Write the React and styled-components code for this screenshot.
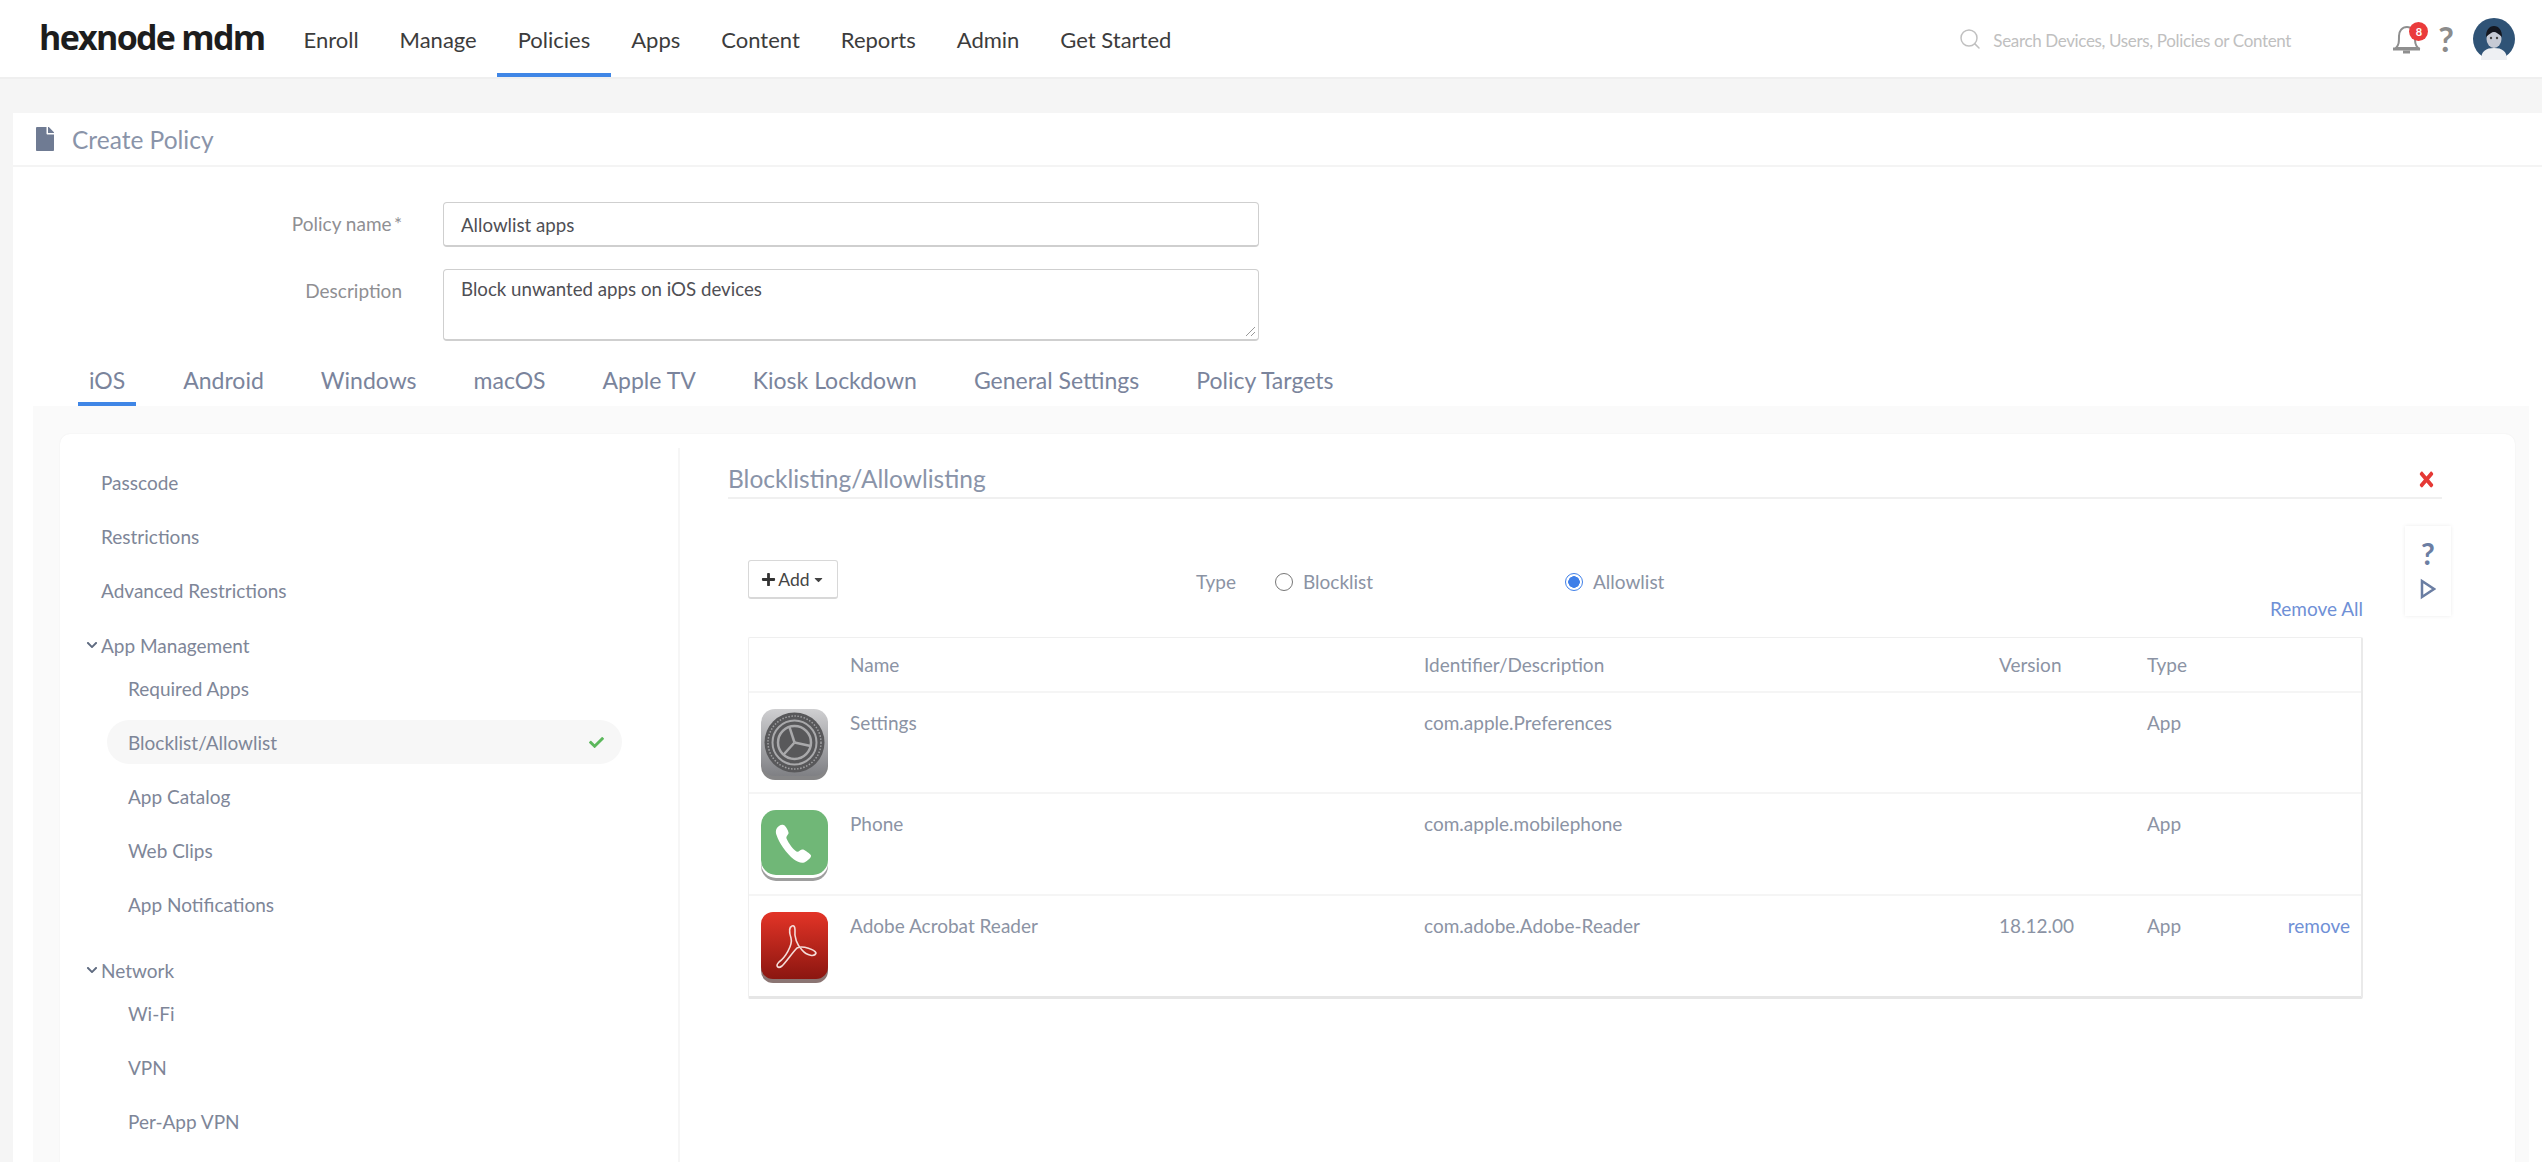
import React from 'react';
import styled, { createGlobalStyle } from 'styled-components';
import { FaFile, FaCheck, FaPlus, FaCaretDown, FaChevronDown, FaTimes } from 'react-icons/fa';
import { FiSearch } from 'react-icons/fi';

const Global = createGlobalStyle`
  html, body { margin: 0; padding: 0; height: 100%; background: #f5f5f5; }
  body { font-family: Lato, "Open Sans", sans-serif; overflow: hidden; }
  * { box-sizing: border-box; }
`;

const Page = styled.div`height: 1162px; overflow: hidden; display: flex; flex-direction: column;`;

const Header = styled.header`
  height: 79px; flex: none; background: #fff; border-bottom: 2px solid #efefef;
  display: flex; align-items: stretch; padding-left: 39px;
`;
const Logo = styled.div`
  font: 700 34px/1 "Open Sans", sans-serif; color: #1d1d1d; letter-spacing: -1.7px;
  width: 244px; align-self: center; padding-bottom: 4px; white-space: nowrap;
`;
const Nav = styled.nav`display: flex; height: 77px;`;
const NavItem = styled.a`
  padding: 6px 20.5px 0; display: flex; align-items: center; font-size: 22px; color: #3c3c3c;
  border-bottom: 4px solid ${p => (p.$active ? '#3f86e6' : 'transparent')};
`;
const HeaderRight = styled.div`margin-left: auto; display: flex; align-items: center; padding-right: 27px;`;
const SearchWrap = styled.div`display: flex; align-items: center; width: 434px; color: #c0c0c0; font-size: 17px; letter-spacing: -0.35px;`;
const SearchText = styled.span`margin: 3px 0 0 11px; white-space: nowrap;`;
const BellWrap = styled.div`position: relative; width: 30px; height: 34px; margin-right: 16px;`;
const Badge = styled.span`
  position: absolute; top: 0; right: -6px; width: 19px; height: 19px; border-radius: 50%;
  background: #ea3b3b; color: #fff; font-size: 11px; font-weight: 700; display: flex; align-items: center; justify-content: center;
`;
const HelpMark = styled.span`font: 700 34px/1 Lato, sans-serif; color: #8c8c8c; margin-right: 19px;`;

const Card = styled.section`flex: 1; background: #fff; margin: 34px 0 0 13px; display: flex; flex-direction: column; min-height: 0;`;
const CardTitle = styled.div`
  height: 54px; flex: none; border-bottom: 2px solid #f4f4f4; display: flex; align-items: center;
  padding-left: 20px; color: #6f7b93; font-size: 24.5px;
`;
const TitleText = styled.span`margin-left: 15px; color: #8a94a9;`;

const FormRow = styled.div`display: grid; grid-template-columns: 389px 816px; column-gap: 41px; margin-top: ${p => p.$mt}px;`;
const Label = styled.label`text-align: right; font-size: 19px; color: #8f8f93; padding-top: ${p => p.$pt}px;`;
const Field = styled.div`
  height: ${p => p.$h}px; border: 1px solid #cfcfcf; border-bottom-width: 2px; border-radius: 4px; background: #fff;
  padding: ${p => p.$pt}px 17px 0; font-size: 18.7px; color: #4f4f55; position: relative;
`;
const Grip = styled.svg`position: absolute; right: 2px; bottom: 2px;`;

const Tabs = styled.div`display: flex; height: 65px; margin-left: 65px;`;
const Tab = styled.a`
  padding: 25px 11px 0; margin-right: ${p => p.$mr}px; font-size: 23px; color: #7a849c;
  ${p => p.$active && 'border-bottom: 4px solid #3f86e6;'}
`;

const Panel = styled.div`flex: 1; background: #fafafa; margin: 0 13px 0 20px; padding: 28px 14px 0 27px; min-height: 0;`;
const Inner = styled.div`
  background: #fff; border-radius: 10px 10px 0 0; height: 800px; display: grid; grid-template-columns: 620px 1fr;
  box-shadow: 0 0 2px rgba(0,0,0,.06);
`;
const Side = styled.aside`border-right: 2px solid #f6f6f6; margin-top: 14px; padding-top: 7px; font-size: 19px; color: #7e8698;`;
const SideItem = styled.div`
  height: 54px; display: flex; align-items: center; padding-left: ${p => (p.$child ? 68 : 41)}px;
`;
const SidePill = styled.div`
  height: 44px; margin: 5px 0 5px 47px; width: 515px; border-radius: 22px; background: #f7f7f7;
  display: flex; align-items: center; justify-content: space-between; padding: 0 18px 0 21px;
`;
const GroupHead = styled.div`
  height: 32px; display: flex; align-items: center; padding-left: 25px; margin-top: ${p => p.$mt}px; gap: 2px;
`;
const Tick = styled(FaCheck)`color: #5cb85c; font-size: 15px;`;
const Caret = styled(FaChevronDown)`font-size: 12px; color: #5f6b80; width: 14px;`;

const Main = styled.div`position: relative; padding-left: 48px;`;
const MainHead = styled.div`
  width: 1714px; height: 65px; padding-top: 29px; border-bottom: 2px solid #f0f0f0; display: flex; justify-content: space-between;
  font-size: 24.5px; color: #8a94a9; line-height: 32px;
`;
const CloseX = styled(FaTimes)`color: #e53935; font-size: 23px; margin: 5px 4px 0 0; transform: scaleX(.85);`;
const HelpBox = styled.div`
  position: absolute; left: 1725px; top: 92px; width: 46px; height: 90px; background: #fff; box-shadow: 0 0 4px rgba(0,0,0,.08);
  display: flex; flex-direction: column; align-items: center; padding-top: 11px; color: #6b7ea3; gap: 9px;
`;
const HelpQ = styled.span`font: 700 30px/32px Lato, sans-serif;`;

const Content = styled.div`width: 1615px; margin-left: 20px;`;
const Toolbar = styled.div`margin-top: 61px; height: 39px; display: flex; align-items: center; font-size: 19px; color: #8b93a4;`;
const AddBtn = styled.button`
  width: 90px; height: 39px; background: #fff; border: 1px solid #d8d8d8; border-bottom-width: 2px; border-radius: 3px; padding: 0;
  display: flex; align-items: center; justify-content: center; gap: 2px; font: 400 17.5px Lato, sans-serif; color: #444; margin-right: 358px;
`;
const TypeLabel = styled.span`width: 79px; padding-top: 4px;`;
const Radio = styled.span`
  width: 18px; height: 18px; border-radius: 50%; flex: none; margin-top: 4px;
  border: 1.5px solid ${p => (p.$on ? '#3f7fe8' : '#777')};
  ${p => p.$on && 'background: radial-gradient(circle, #3f7fe8 0 5.5px, #fff 6px);'}
`;
const RadioLabel = styled.span`margin-left: 10px; width: ${p => p.$w || 'auto'}; padding-top: 4px;`;
const RemoveAll = styled.div`height: 20px; line-height: 20px; text-align: right; font-size: 19px; color: #6f90d6;`;

const Table = styled.div`
  margin-top: 18px; border: 1px solid #efefef; border-bottom: 3px solid #e6e6e6; border-right: 2px solid #eaeaea; border-radius: 2px;
`;
const Row = styled.div`
  display: grid; grid-template-columns: 101px 574px 575px 148px 110px 1fr; height: ${p => p.$h}px;
  border-bottom: ${p => (p.$last ? 'none' : '2px solid #f5f5f5')}; font-size: 19px; color: #8b93a4;
  line-height: 24px;
`;
const HeadCell = styled.div`white-space: nowrap; padding-top: 15px;`;
const Cell = styled.div`white-space: nowrap; padding-top: 18px;`;
const IconCell = styled.div`padding: 16px 0 0 12px;`;
const RemoveCell = styled(Cell)`text-align: right; padding-right: 11px; color: #6f90d6;`;

const Ico = styled.svg`display: block;`;

const spokes = [-18, 102, 222];
const SettingsIcon = () => (
  <Ico width="67" height="71" viewBox="0 0 67 71">
    <defs>
      <linearGradient id="sg" x1="0" y1="0" x2="0" y2="1"><stop offset="0" stopColor="#cfcfd1" /><stop offset="1" stopColor="#7f8084" /></linearGradient>
    </defs>
    <rect y="3" width="67" height="68" rx="14" fill="#5c5c5e" opacity=".75" />
    <rect width="67" height="67" rx="14" fill="url(#sg)" />
    <circle cx="33.5" cy="33.5" r="30" fill="#58585a" />
    <circle cx="33.5" cy="33.5" r="26.5" fill="none" stroke="#a0a0a2" strokeWidth="1.5" strokeDasharray="1.5 1.6" />
    <circle cx="33.5" cy="33.5" r="22" fill="none" stroke="#a9a9ab" strokeWidth="2" />
    <circle cx="33.5" cy="33.5" r="16.500" fill="none" stroke="#a9a9ab" strokeWidth="2.500" />
    {spokes.map(a => (
      <path key={a} d="M33.5 33.5V17" stroke="#a9a9ab" strokeWidth="2.500" transform={`rotate(${a} 33.5 33.5)`} />
    ))}
  </Ico>
);
const PhoneIcon = () => (
  <Ico width="67" height="71" viewBox="0 0 67 71">
    <rect y="4" width="67" height="67" rx="15" fill="#6a6a6a" opacity=".65" />
    <rect y="2" width="67" height="66" rx="15" fill="#fff" />
    <rect width="67" height="65" rx="15" fill="#70b777" />
    <path d="M18 16 C15.5 18 14 20.5 15.5 25 C18 33 25 43 33 49.5 C37 52.5 42 54 45 51.5 C47 50 50.5 47.5 50 45.5 C49.500 44 44 40 42 39.500 C39.500 39 38 42.500 35.500 41.500 C32 39.500 27.500 33 25.500 28.500 C24.800 26 28 24.500 27.500 22.500 C27 20 24.500 15.500 22.500 15 C21 14.500 19.500 15 18 16 Z" fill="#fff" />
  </Ico>
);
const AcrobatIcon = () => (
  <Ico width="67" height="71" viewBox="0 0 67 71">
    <defs>
      <linearGradient id="ag" x1="0" y1="0" x2="0" y2="1"><stop offset="0" stopColor="#e33427" /><stop offset="1" stopColor="#8b1610" /></linearGradient>
    </defs>
    <rect y="3" width="67" height="68" rx="12" fill="#5a3a38" opacity=".7" />
    <rect width="67" height="67" rx="12" fill="url(#ag)" />
    <path d="M31 14 C28 15 28 20 30 26 C32 33 24 46 18 50 C14 54 17 57 21 54 C26 49 31 41 36 36 C42 33 54 38 55 41 C54 45 46 44 41 38 C36 33 33 25 34 18 C34 15 33 13 31 14 Z" fill="none" stroke="#f4dcd8" strokeWidth="1.600" />
  </Ico>
);

const BellIcon = () => (
  <Ico width="30" height="34" viewBox="0 0 30 34" fill="none" stroke="#8f8f8f" strokeWidth="2">
    <path d="M4 26c3-3 3-6 3-12 0-5 3-9 8-9s8 4 8 9c0 6 0 9 3 12z" />
    <path d="M1 27h27" strokeWidth="3" />
    <path d="M11 30h7" strokeWidth="3" />
  </Ico>
);
const Avatar = () => (
  <Ico width="42" height="42" viewBox="0 0 42 42">
    <circle cx="21" cy="21" r="21" fill="#2f5376" />
    <path d="M8 42c0-9 5-12 13-12s13 3 13 12z" fill="#eef0f3" />
    <ellipse cx="21" cy="21" rx="7.500" ry="9" fill="#c6cad4" />
    <path d="M13 19c0-7 3-11 8-11s8 4 8 11c-3-3-6-5-8-5s-5 2-8 5z" fill="#14171f" />
    <circle cx="18" cy="20" r="1.200" fill="#444" /><circle cx="24" cy="20" r="1.200" fill="#444" />
  </Ico>
);
const PlayIcon = () => (
  <Ico width="16" height="22" viewBox="0 0 16 22" fill="none" stroke="#6b7ea3" strokeWidth="2.500"><path d="M2 3l12 8-12 8z" /></Ico>
);

const nav = [['Enroll'], ['Manage'], ['Policies', true], ['Apps'], ['Content'], ['Reports'], ['Admin'], ['Get Started']];
const tabs = [['iOS', 36, true], ['Android', 35], ['Windows', 35], ['macOS', 35], ['Apple TV', 35], ['Kiosk Lockdown', 35], ['General Settings', 35], ['Policy Targets', 0]];
const rows = [
  { icon: <SettingsIcon />, name: 'Settings', id: 'com.apple.Preferences', h: 101 },
  { icon: <PhoneIcon />, name: 'Phone', id: 'com.apple.mobilephone', h: 102 },
  { icon: <AcrobatIcon />, name: 'Adobe Acrobat Reader', id: 'com.adobe.Adobe-Reader', version: '18.12.00', h: 100, last: true },
];

export default function App() {
  return (
    <Page>
      <Global />
      <Header>
        <Logo>hexnode mdm</Logo>
        <Nav>
          {nav.map(([t, a]) => <NavItem key={t} $active={a}>{t}</NavItem>)}
        </Nav>
        <HeaderRight>
          <SearchWrap>
            <FiSearch size={24} strokeWidth={1.5} />
            <SearchText>Search Devices, Users, Policies or Content</SearchText>
          </SearchWrap>
          <BellWrap><BellIcon /><Badge>8</Badge></BellWrap>
          <HelpMark>?</HelpMark>
          <Avatar />
        </HeaderRight>
      </Header>
      <Card>
        <CardTitle><FaFile size={24} color="#6f7b93" /><TitleText>Create Policy</TitleText></CardTitle>
        <FormRow $mt={35}>
          <Label $pt={10}>Policy name{'\u2009'}*</Label>
          <Field $h={45} $pt={11}>Allowlist apps</Field>
        </FormRow>
        <FormRow $mt={22}>
          <Label $pt={10}>Description</Label>
          <Field $h={72} $pt={8}>
            Block unwanted apps on iOS devices
            <Grip width="12" height="12" viewBox="0 0 12 12" fill="none" stroke="#999" strokeWidth="1"><path d="M11 2L2 11M11 7L7 11" /></Grip>
          </Field>
        </FormRow>
        <Tabs>
          {tabs.map(([t, m, a]) => <Tab key={t} $mr={m} $active={a}>{t}</Tab>)}
        </Tabs>
        <Panel>
          <Inner>
            <Side>
              <SideItem>Passcode</SideItem>
              <SideItem>Restrictions</SideItem>
              <SideItem>Advanced Restrictions</SideItem>
              <GroupHead $mt={12}><Caret />App Management</GroupHead>
              <SideItem $child>Required Apps</SideItem>
              <SidePill>Blocklist/Allowlist<Tick /></SidePill>
              <SideItem $child>App Catalog</SideItem>
              <SideItem $child>Web Clips</SideItem>
              <SideItem $child>App Notifications</SideItem>
              <GroupHead $mt={23}><Caret />Network</GroupHead>
              <SideItem $child>Wi-Fi</SideItem>
              <SideItem $child>VPN</SideItem>
              <SideItem $child>Per-App VPN</SideItem>
            </Side>
            <Main>
              <MainHead>Blocklisting/Allowlisting<CloseX /></MainHead>
              <HelpBox><HelpQ>?</HelpQ><PlayIcon /></HelpBox>
              <Content>
                <Toolbar>
                  <AddBtn><FaPlus size={15} color="#333" />Add<FaCaretDown size={13} color="#444" /></AddBtn>
                  <TypeLabel>Type</TypeLabel>
                  <Radio />
                  <RadioLabel $w="262px">Blocklist</RadioLabel>
                  <Radio $on />
                  <RadioLabel>Allowlist</RadioLabel>
                </Toolbar>
                <RemoveAll>Remove All</RemoveAll>
                <Table>
                  <Row $h={55}>
                    <HeadCell /><HeadCell>Name</HeadCell><HeadCell>Identifier/Description</HeadCell><HeadCell>Version</HeadCell><HeadCell>Type</HeadCell><HeadCell />
                  </Row>
                  {rows.map(r => (
                    <Row key={r.name} $h={r.h} $last={r.last}>
                      <IconCell>{r.icon}</IconCell>
                      <Cell>{r.name}</Cell>
                      <Cell>{r.id}</Cell>
                      <Cell>{r.version}</Cell>
                      <Cell>App</Cell>
                      {r.last ? <RemoveCell>remove</RemoveCell> : <Cell />}
                    </Row>
                  ))}
                </Table>
              </Content>
            </Main>
          </Inner>
        </Panel>
      </Card>
    </Page>
  );
}
